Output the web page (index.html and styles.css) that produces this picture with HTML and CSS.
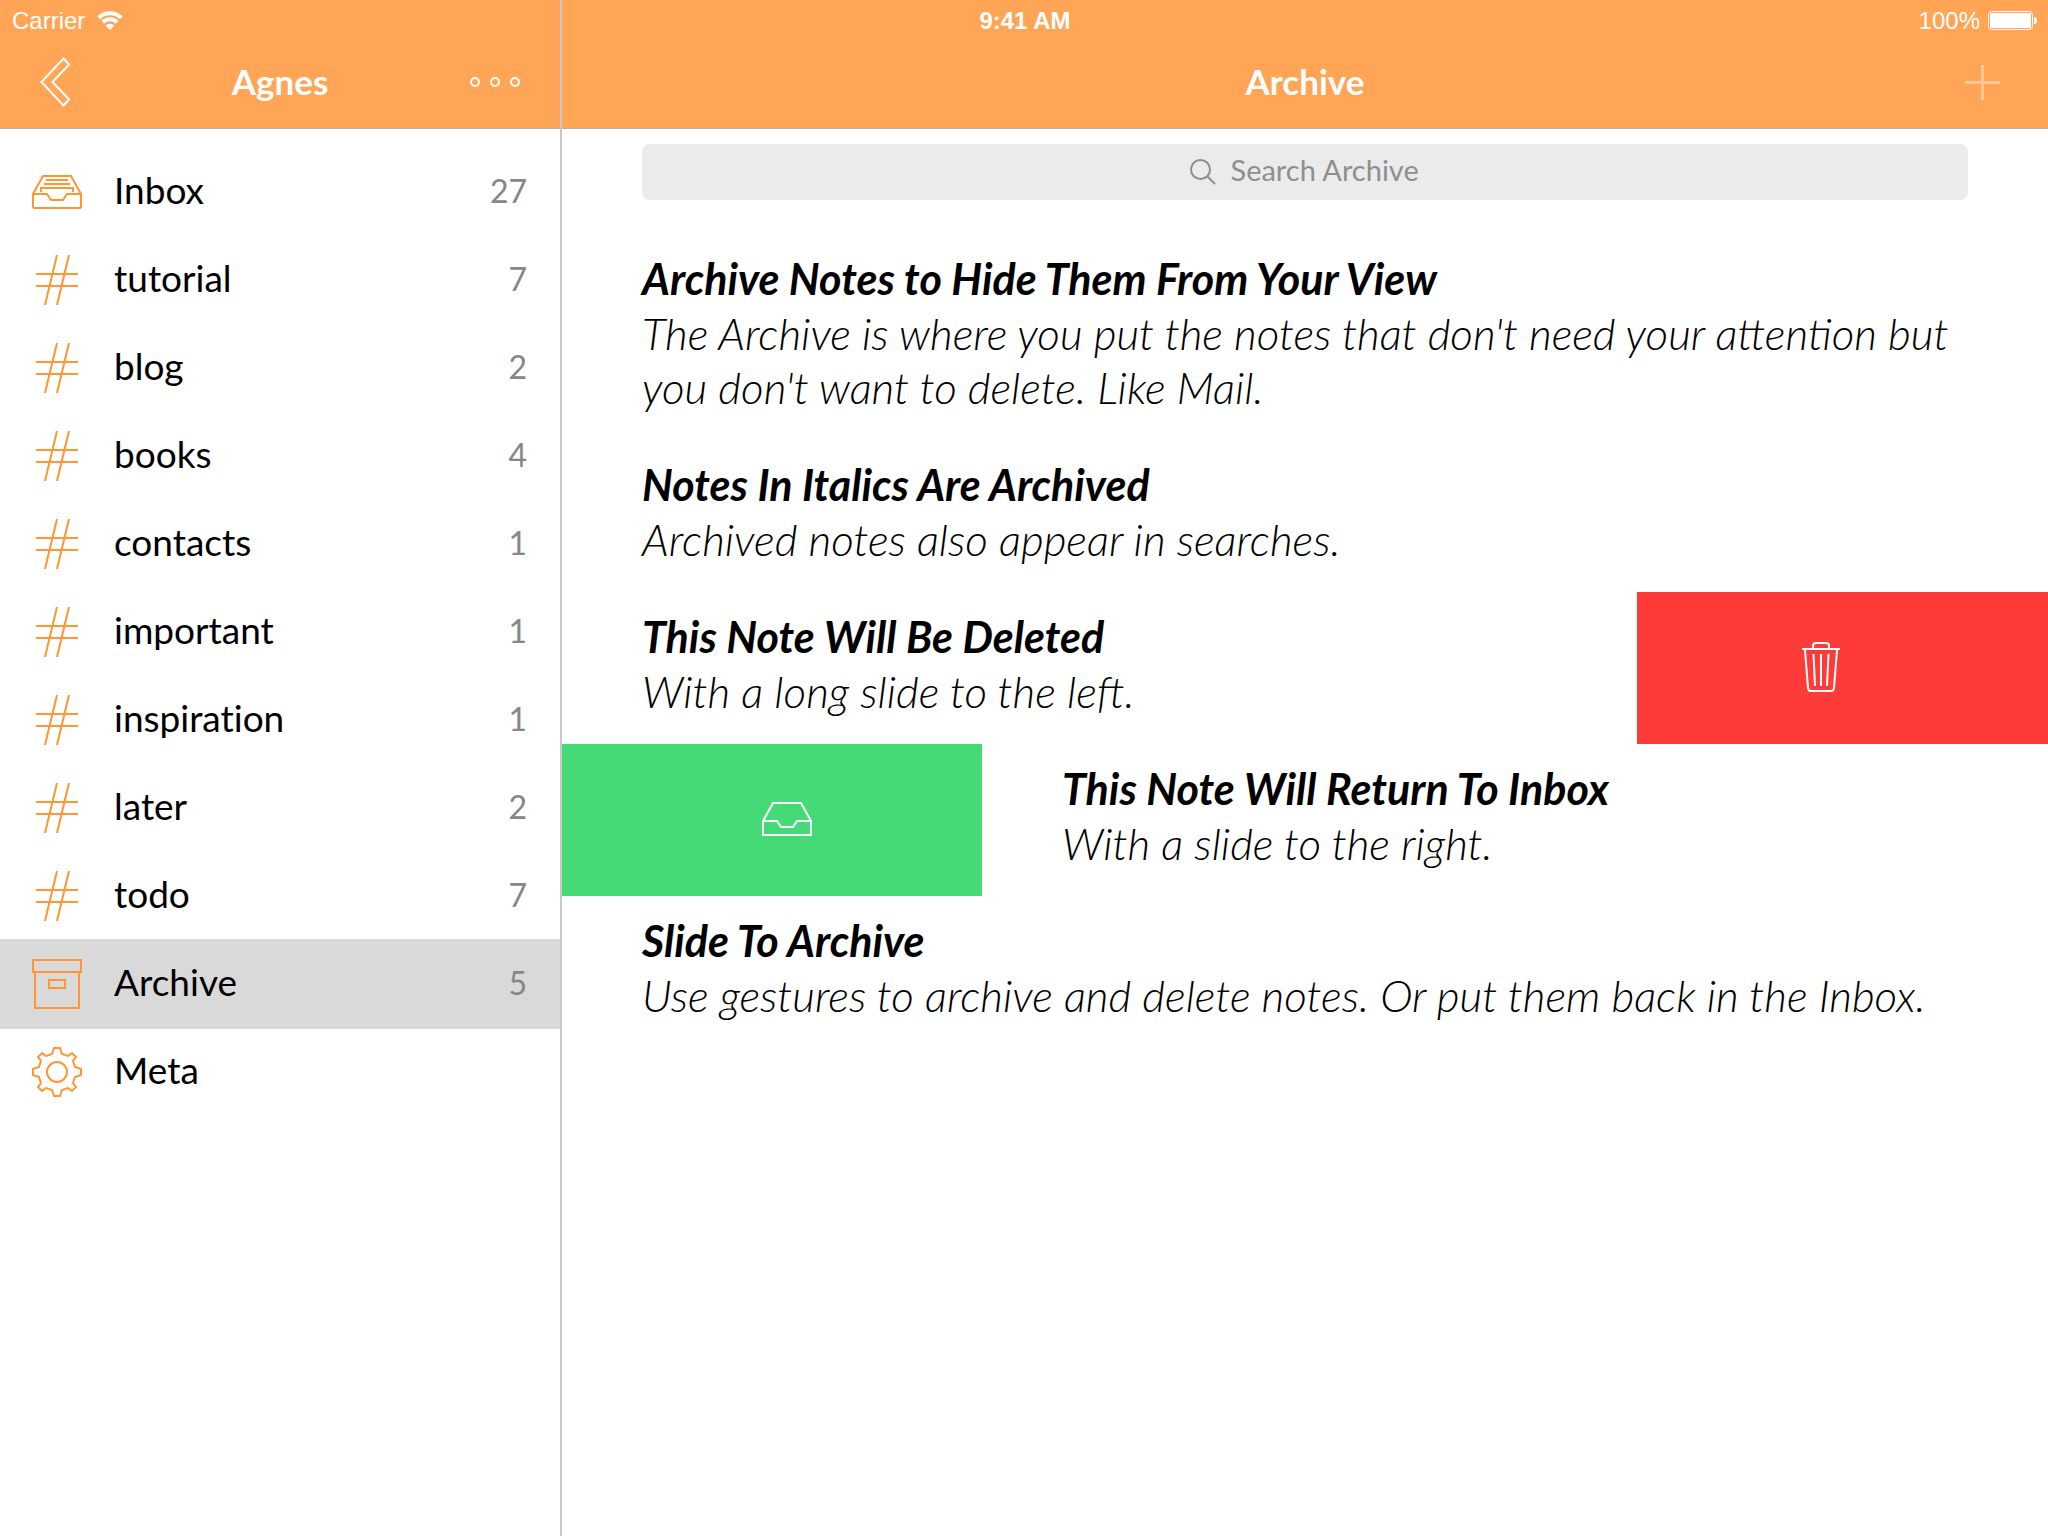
FILE: index.html
```html
<!DOCTYPE html>
<html lang="en">
<head>
<meta charset="utf-8">
<meta name="viewport" content="width=device-width, initial-scale=1">
<title>Agnes – Archive</title>
<link rel="stylesheet" href="styles.css">
</head>
<body>
<svg class="sprite" aria-hidden="true">
  <symbol id="i-inbox" viewBox="0 0 50 50">
    <path d="M11 9H39L49 27V40L48 41H2L1 40V27ZM1 27H15L19 33H31L35 27H49M14 13H36M12 17H38M9 25V21H41V25"/>
  </symbol>
  <symbol id="i-tray" viewBox="0 0 50 50">
    <path d="M11 9H39L49 27V41H1V27ZM1 27H15L19 33H31L35 27H49"/>
  </symbol>
  <symbol id="i-hash" viewBox="0 0 50 50">
    <path d="M4 19H46M4 31H46M25 0L13 50M37 0L25 50"/>
  </symbol>
  <symbol id="i-archive" viewBox="0 0 50 50">
    <path d="M1 1H49V13H1ZM3 13V49H47V13M17 21H33V29H17Z"/>
  </symbol>
  <symbol id="i-gear" viewBox="0 0 50 50">
    <path d="M22 1H28L30 7L36 9L40 6L44 10L41 14L43 20L49 22V28L43 30L41 36L44 40L40 44L36 41L30 43L28 49H22L20 43L14 41L10 44L6 40L9 36L7 30L1 28V22L7 20L9 14L6 10L10 6L14 9L20 7Z"/>
    <circle cx="25" cy="25" r="10"/>
  </symbol>
  <symbol id="i-trash" viewBox="0 0 50 50">
    <path d="M6 7H44M17 7V4Q17 1 20 1H30Q33 1 33 4V7M9 8L12 46Q12.500 49 15 49H35Q37.500 49 38 46L41 8M17.500 12L19 44M25 12V44M32.500 12L31 44"/>
  </symbol>
</svg>

<div class="app">
  <div class="status">
    <div class="status-side">
      <span>Carrier</span>
      <svg class="wifi" viewBox="0 0 26 20" aria-label="Wi-Fi">
        <path d="M1.800 6.800A16 16 0 0 1 24.200 6.800M5.800 11.200A10.300 10.300 0 0 1 20.200 11.200"/>
        <path class="solid" d="M8.600 14.500A6.200 6.200 0 0 1 17.400 14.500L13 19Z"/>
      </svg>
    </div>
    <time class="clock">9:41 AM</time>
    <div class="status-side status-end">
      <span>100%</span>
      <svg class="battery" viewBox="0 0 50 20" aria-label="Battery full">
        <rect class="shell" x="0.500" y="0.500" width="44" height="18" rx="3"/>
        <rect class="solid" x="2" y="2" width="41" height="15" rx="1"/>
        <path class="solid" d="M46 6Q49 6 49 9.500Q49 13 46 13Z"/>
      </svg>
    </div>
  </div>

  <nav class="sidebar" aria-label="Folders">
    <header class="bar">
      <button class="bar-button" type="button" aria-label="Back">
        <svg class="back" viewBox="0 0 30 50"><path d="M23.500 1.500L29 7.500L12.500 25L29 42.500L23.500 48.500L1.500 25Z"/></svg>
      </button>
      <h1 class="bar-title">Agnes</h1>
      <button class="bar-button bar-end" type="button" aria-label="More">
        <svg class="more" viewBox="0 0 50 10"><circle cx="5" cy="5" r="4"/><circle cx="25" cy="5" r="4"/><circle cx="45" cy="5" r="4"/></svg>
      </button>
    </header>
    <ul class="folders">
      <li><a class="folder" href="#inbox"><svg class="icon"><use href="#i-inbox"/></svg><span class="name">Inbox</span><span class="count">27</span></a></li>
      <li><a class="folder" href="#tutorial"><svg class="icon"><use href="#i-hash"/></svg><span class="name">tutorial</span><span class="count">7</span></a></li>
      <li><a class="folder" href="#blog"><svg class="icon"><use href="#i-hash"/></svg><span class="name">blog</span><span class="count">2</span></a></li>
      <li><a class="folder" href="#books"><svg class="icon"><use href="#i-hash"/></svg><span class="name">books</span><span class="count">4</span></a></li>
      <li><a class="folder" href="#contacts"><svg class="icon"><use href="#i-hash"/></svg><span class="name">contacts</span><span class="count">1</span></a></li>
      <li><a class="folder" href="#important"><svg class="icon"><use href="#i-hash"/></svg><span class="name">important</span><span class="count">1</span></a></li>
      <li><a class="folder" href="#inspiration"><svg class="icon"><use href="#i-hash"/></svg><span class="name">inspiration</span><span class="count">1</span></a></li>
      <li><a class="folder" href="#later"><svg class="icon"><use href="#i-hash"/></svg><span class="name">later</span><span class="count">2</span></a></li>
      <li><a class="folder" href="#todo"><svg class="icon"><use href="#i-hash"/></svg><span class="name">todo</span><span class="count">7</span></a></li>
      <li><a class="folder selected" href="#archive" aria-current="page"><svg class="icon"><use href="#i-archive"/></svg><span class="name">Archive</span><span class="count">5</span></a></li>
      <li><a class="folder" href="#meta"><svg class="icon"><use href="#i-gear"/></svg><span class="name">Meta</span></a></li>
    </ul>
  </nav>

  <main class="content">
    <header class="bar">
      <h2 class="bar-title">Archive</h2>
      <button class="bar-button bar-end" type="button" aria-label="New note" disabled>
        <svg class="plus" viewBox="0 0 35 35"><path d="M0 17.500H35M17.500 0V35"/></svg>
      </button>
    </header>
    <label class="search">
      <svg class="glass" viewBox="0 0 26 26"><circle cx="10.500" cy="10.500" r="9.500"/><path d="M17 17L25 25"/></svg>
      <input class="search-input" type="search" placeholder="Search Archive" aria-label="Search Archive">
    </label>
    <div class="notes">
      <article class="note">
        <div class="note-text">
          <h3>Archive Notes to Hide Them From Your View</h3>
          <p>The Archive is where you put the notes that don't need your attention but you don't want to delete. Like Mail.</p>
        </div>
      </article>
      <article class="note">
        <div class="note-text">
          <h3>Notes In Italics Are Archived</h3>
          <p>Archived notes also appear in searches.</p>
        </div>
      </article>
      <article class="note">
        <div class="note-text">
          <h3>This Note Will Be Deleted</h3>
          <p>With a long slide to the left.</p>
        </div>
        <button class="action delete" type="button" aria-label="Delete"><svg class="icon"><use href="#i-trash"/></svg></button>
      </article>
      <article class="note">
        <button class="action restore" type="button" aria-label="Return to Inbox"><svg class="icon"><use href="#i-tray"/></svg></button>
        <div class="note-text">
          <h3>This Note Will Return To Inbox</h3>
          <p>With a slide to the right.</p>
        </div>
      </article>
      <article class="note">
        <div class="note-text">
          <h3>Slide To Archive</h3>
          <p>Use gestures to archive and delete notes. Or put them back in the Inbox.</p>
        </div>
      </article>
    </div>
  </main>
</div>
</body>
</html>
```

FILE: styles.css
```css
* {
  box-sizing: border-box;
}

body {
  margin: 0;
  background: #fff;
  color: #000;
  font-family: Lato, "Open Sans", sans-serif;
}

h1, h2, h3, p, ul {
  margin: 0;
  padding: 0;
}

button {
  border: 0;
  padding: 0;
  background: none;
  font: inherit;
  color: inherit;
}

svg {
  display: block;
  flex: none;
  fill: none;
  stroke: currentColor;
  stroke-width: 2;
}

.sprite {
  display: none;
}

.solid {
  fill: currentColor;
  stroke: none;
}

.app {
  display: grid;
  grid-template-columns: 562px 1fr;
  grid-template-rows: 40px 1fr;
  min-height: 100vh;
}

/* The status bar shares its row with the tops of both panes. */
.status {
  grid-area: 1 / 1 / 2 / 3;
  z-index: 1;
  display: grid;
  grid-template-columns: 1fr auto 1fr;
  align-items: center;
  padding: 2px 10px 0 12px;
  color: #fff;
  font-family: "Liberation Sans", Arial, sans-serif;
  font-size: 24px;
  line-height: 38px;
}

.status-side {
  display: flex;
  align-items: center;
  gap: 12px;
}

.status-end {
  justify-content: flex-end;
  gap: 8px;
}

.clock {
  font-weight: 700;
}

.wifi {
  width: 26px;
  height: 20px;
  stroke-width: 4;
}

.battery {
  width: 50px;
  height: 20px;
}

.shell {
  stroke-width: 1;
}

/* Panes */
.sidebar {
  grid-area: 1 / 1 / 3 / 2;
  border-right: 2px solid #c8c7cc;
}

.content {
  grid-area: 1 / 2 / 3 / 3;
  min-width: 0;
}

.bar {
  display: grid;
  grid-template-columns: 1fr auto 1fr;
  align-items: center;
  height: 129px;
  padding: 36px 40px 0;
  border-bottom: 1px solid #b2b2b2;
  background: #ffa555;
  color: #fff;
}

.content .bar {
  padding-right: 48px;
  padding-left: 48px;
}

.bar-title {
  grid-column: 2;
  padding-bottom: 2px;
  font-size: 35px;
  line-height: 44px;
  font-weight: 700;
}

.bar-button {
  grid-row: 1;
  justify-self: start;
}

.bar-end {
  grid-column: 3;
  justify-self: end;
}

.back {
  width: 30px;
  height: 50px;
}

.more {
  width: 50px;
  height: 10px;
}

.plus {
  width: 35px;
  height: 35px;
  stroke-width: 3;
  opacity: 0.4;
}

/* Folder list */
.folders {
  padding: 19px 0;
  list-style: none;
}

.folder {
  display: flex;
  align-items: center;
  gap: 32px;
  height: 88px;
  padding: 0 33px 0 32px;
  color: #000;
  font-size: 37px;
  line-height: 44px;
  font-variant-ligatures: none;
  text-decoration: none;
}

.selected {
  background: #d9d9d9;
  box-shadow: 0 -1px #d9d9d9, 0 1px #d9d9d9;
}

.icon {
  width: 50px;
  height: 50px;
}

.folder .icon {
  color: #ff9632;
}

.name {
  flex: 1;
  padding-bottom: 4px;
}

.count {
  padding-bottom: 2px;
  color: #868686;
  font-size: 32px;
}

/* Search */
.search {
  display: flex;
  align-items: center;
  justify-content: center;
  gap: 15px;
  height: 56px;
  margin: 15px 80px 34px;
  border-radius: 8px;
  background: #ebebeb;
  color: #8e8e93;
}

.glass {
  width: 26px;
  height: 26px;
}

.search-input {
  width: 190px;
  border: 0;
  padding: 0 0 4px;
  background: none;
  color: #000;
  font: inherit;
  font-size: 29px;
  line-height: 36px;
  outline: 0;
  appearance: none;
}

.search-input::-webkit-search-cancel-button {
  display: none;
}

.search-input::placeholder {
  color: #8e8e93;
  opacity: 1;
}

/* Notes */
.note {
  display: flex;
}

.note-text {
  flex: 1;
  min-width: 0;
  padding: 18px 80px 26px;
  font-size: 44px;
  line-height: 54px;
  font-style: italic;
  font-weight: 300;
}

.note-text h3 {
  font-size: 43px;
  font-weight: 700;
}

.action {
  display: flex;
  align-items: center;
  padding-bottom: 2px;
  color: #fff;
}

.delete {
  width: 411px;
  padding-left: 159px;
  background: #ff3b39;
}

.restore {
  width: 420px;
  padding-right: 170px;
  justify-content: flex-end;
  background: #46da76;
}
```
